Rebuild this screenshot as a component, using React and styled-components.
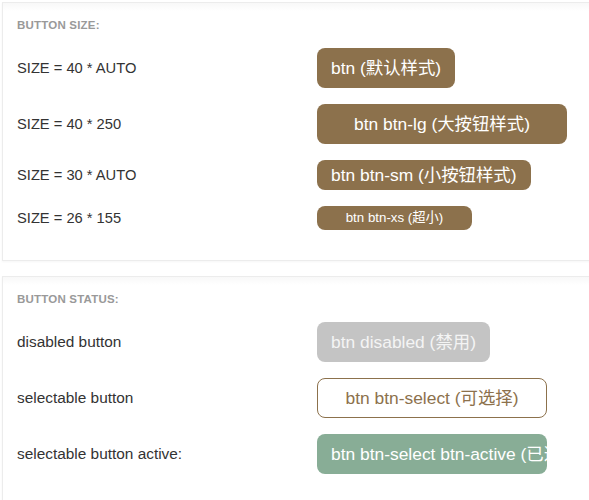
import React from "react";
import styled, { createGlobalStyle, css } from "styled-components";

const GlobalStyle = createGlobalStyle`
  html, body { margin: 0; padding: 0; background: #fff; overflow: hidden; }
  body { font-family: "Liberation Sans", "Noto Sans CJK SC", Arial, sans-serif; }
`;

const Page = styled.div`
  width: 640px;
  padding: 2px 0 0 2px;
  display: flex;
  flex-direction: column;
  gap: 15px;
`;

const Card = styled.section`
  background: linear-gradient(to bottom, #f8f8f8 0, #fff 8px);
  border: 1px solid #ececec;
  border-right: none;
  box-shadow: 0 1px 2px rgba(0, 0, 0, 0.04);
  padding: 14px 0 30px 14px;
`;

const Heading = styled.h3`
  margin: 0 0 15px;
  font-size: 11.5px;
  line-height: 16px;
  font-weight: bold;
  color: #999;
  letter-spacing: 0.2px;
  text-transform: uppercase;
`;

const Rows = styled.div`
  display: flex;
  flex-direction: column;
  gap: 16px;
`;

const Row = styled.div`
  display: flex;
  align-items: center;
`;

const Label = styled.div`
  width: 300px;
  flex: none;
  font-size: ${(p) => p.$fs}px;
  color: #333;
`;

const variants = {
  primary: css`
    background: #8c714c;
    color: #fff;
  `,
  disabled: css`
    background: #c4c4c4;
    color: #f4f4f4;
  `,
  select: css`
    background: #fff;
    color: #8c714c;
    border: 1px solid #8c714c;
  `,
  active: css`
    background: #88ad96;
    color: #fff;
  `,
};

const Btn = styled.div`
  box-sizing: border-box;
  flex: none;
  height: ${(p) => p.$h}px;
  line-height: ${(p) => (p.$variant === "select" ? p.$h - 2 : p.$h)}px;
  width: ${(p) => (p.$w ? `${p.$w}px` : "auto")};
  padding: 0 14px;
  border-radius: 8px;
  font-size: ${(p) => p.$fs || 17.4}px;
  text-align: center;
  white-space: nowrap;
  overflow: hidden;
  ${(p) => variants[p.$variant || "primary"]}
`;

const sizeRows = [
  { label: "SIZE = 40 * AUTO", text: "btn (默认样式)", h: 40 },
  { label: "SIZE = 40 * 250", text: "btn btn-lg (大按钮样式)", h: 40, w: 250 },
  { label: "SIZE = 30 * AUTO", text: "btn btn-sm (小按钮样式)", h: 30 },
  { label: "SIZE = 26 * 155", text: "btn btn-xs (超小)", h: 24, w: 155, fs: 13.3 },
];

const statusRows = [
  { label: "disabled button", text: "btn disabled (禁用)", h: 40, variant: "disabled" },
  { label: "selectable button", text: "btn btn-select (可选择)", h: 40, w: 230, variant: "select" },
  {
    label: "selectable button active:",
    text: "btn btn-select btn-active (已选择)",
    h: 40,
    w: 230,
    variant: "active",
  },
];

function Section({ title, rows, labelSize }) {
  return (
    <Card>
      <Heading>{title}</Heading>
      <Rows>
        {rows.map((r) => (
          <Row key={r.label}>
            <Label $fs={labelSize}>{r.label}</Label>
            <Btn $h={r.h} $w={r.w} $fs={r.fs} $variant={r.variant}>
              {r.text}
            </Btn>
          </Row>
        ))}
      </Rows>
    </Card>
  );
}

export default function App() {
  return (
    <>
      <GlobalStyle />
      <Page>
        <Section title="Button size:" rows={sizeRows} labelSize={14.7} />
        <Section title="Button status:" rows={statusRows} labelSize={15.4} />
      </Page>
    </>
  );
}
